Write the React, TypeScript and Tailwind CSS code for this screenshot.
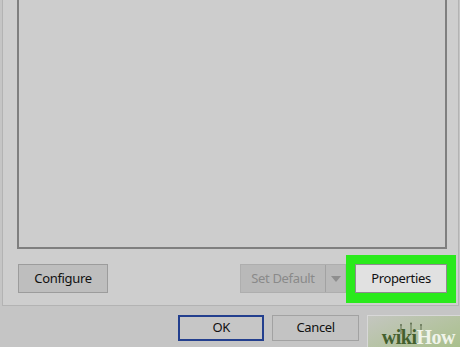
import React from "react";

function Btn({ label, className = "" }: { label: string; className?: string }) {
  return (
    <div className={`flex items-center justify-center h-full border ${className}`}>
      <span>{label}</span>
    </div>
  );
}

export default function App() {
  return (
    <div
      className="relative w-[460px] h-[347px] bg-[#c5c5c5] overflow-hidden text-[13px] tracking-[-0.35px] text-[#111] flex flex-col"
      style={{ fontFamily: '"Noto Sans", "Open Sans", sans-serif' }}
    >
      {/* tab page */}
      <div className="ml-[2px] mr-[1px] h-[306px] bg-[#cecece] border-l border-r border-b border-[#b3b3b3] flex flex-col pl-[14px] pr-[11px]">
        <div className="flex-1 bg-[#cdcdcd] border-l-2 border-r-2 border-b-2 border-[#7f7f7f]" />

        <div className="mt-[15px] mb-[12px] h-[29px] flex items-stretch">
          <Btn label="Configure" className="w-[90px] ml-[1px] bg-[#bebebe] border-[#9c9c9c]" />
          <div className="flex-1" />
          {/* split button, disabled */}
          <div className="flex h-full bg-[#b9b9b9] border border-[#aeaeae] text-[#8a8a8a]">
            <div className="w-[85px] flex items-center justify-center border-r border-[#a2a2a2]">
              Set Default
            </div>
            <div className="w-[19px] flex items-center justify-center">
              <svg width="10" height="6" viewBox="0 0 10 6">
                <path d="M0 0 L10 0 L5 6 Z" fill="#8e8e8e" />
              </svg>
            </div>
          </div>
          <div className="relative w-[92px] ml-[9px]">
            <Btn label="Properties" className="bg-[#e1e1e1] border-[#8d8d8d]" />
            <div className="absolute -inset-[9px] -bottom-[10px] border-[9px] border-b-[10px] border-[#2aea1c] pointer-events-none" />
          </div>
        </div>
      </div>

      {/* dialog buttons */}
      <div className="flex mt-[9px] h-[26px] pl-[178px] gap-[8px]">
        <Btn label="OK" className="w-[89px] bg-[#c6c6c6] border-2 border-[#233f8e]" />
        <Btn label="Cancel" className="w-[89px] bg-[#c3c3c3] border-[#a2a2a2]" />
        <div className="relative w-[96px] h-[40px] bg-gradient-to-br from-[#c4c6c0] via-[#b5c3a2] to-[#a6bf86] border-t border-l border-[#d8d8d8]">
          <svg className="absolute left-[30px] top-[6px]" width="26" height="12" viewBox="0 0 26 12">
            <path d="M3 12 L3 4 M13 12 L13 2 M23 12 L23 4" stroke="#5e6e4f" strokeWidth="1" />
            <circle cx="3" cy="3" r="1" fill="#5e6e4f" />
            <circle cx="13" cy="1.5" r="1" fill="#5e6e4f" />
            <circle cx="23" cy="3" r="1" fill="#5e6e4f" />
          </svg>
          <div
            className="absolute right-[5px] top-[11px] text-[20px] leading-none font-bold tracking-[-0.5px]"
            style={{ fontFamily: '"Liberation Serif", serif' }}
          >
            <span className="text-[#44602e]">wiki</span>
            <span className="text-[#f0f4ea]">How</span>
          </div>
        </div>
      </div>
    </div>
  );
}
